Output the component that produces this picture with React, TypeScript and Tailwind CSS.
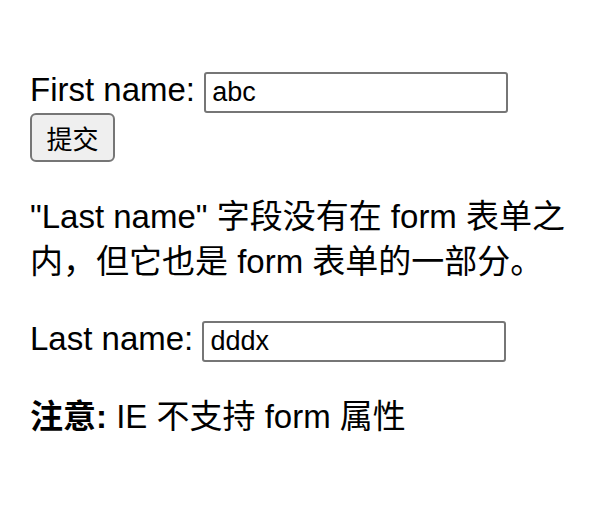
import type { FormEvent } from "react";

const inputCls =
  "w-[304px] h-[41px] box-border border-2 border-[#767676] rounded-[3px] bg-white pl-[6px] pr-[4px] py-0 align-baseline text-[27px] leading-[normal] text-black font-['Liberation_Sans','Noto_Sans_CJK_SC',sans-serif] outline-none";

export default function App() {
  const onSubmit = (e: FormEvent) => e.preventDefault();

  return (
    <div className="min-h-screen bg-white pl-[30px] pr-[26px] pt-[67px] text-[33px] leading-[45px] text-black font-['Liberation_Sans','Noto_Sans_CJK_SC',sans-serif]">
      <form id="form1" onSubmit={onSubmit}>
        First name: <input type="text" name="fname" defaultValue="abc" className={inputCls} />
        <br />
        <input
          type="submit"
          value="提交"
          className="w-[85px] h-[49px] box-border border-2 border-[#767676] rounded-[6px] bg-[#efefef] p-0 align-baseline text-[26px] leading-[normal] text-black font-['Liberation_Sans','Noto_Sans_CJK_SC',sans-serif]"
        />
      </form>

      <p className="my-[32px]">
        "Last name" 字段没有在 form 表单之内，但它也是 form 表单的一部分。
      </p>

      Last name: <input type="text" name="lname" form="form1" defaultValue="dddx" className={inputCls} />

      <p className="my-[32px]">
        <b className="font-bold">注意:</b> IE 不支持 form 属性
      </p>
    </div>
  );
}
